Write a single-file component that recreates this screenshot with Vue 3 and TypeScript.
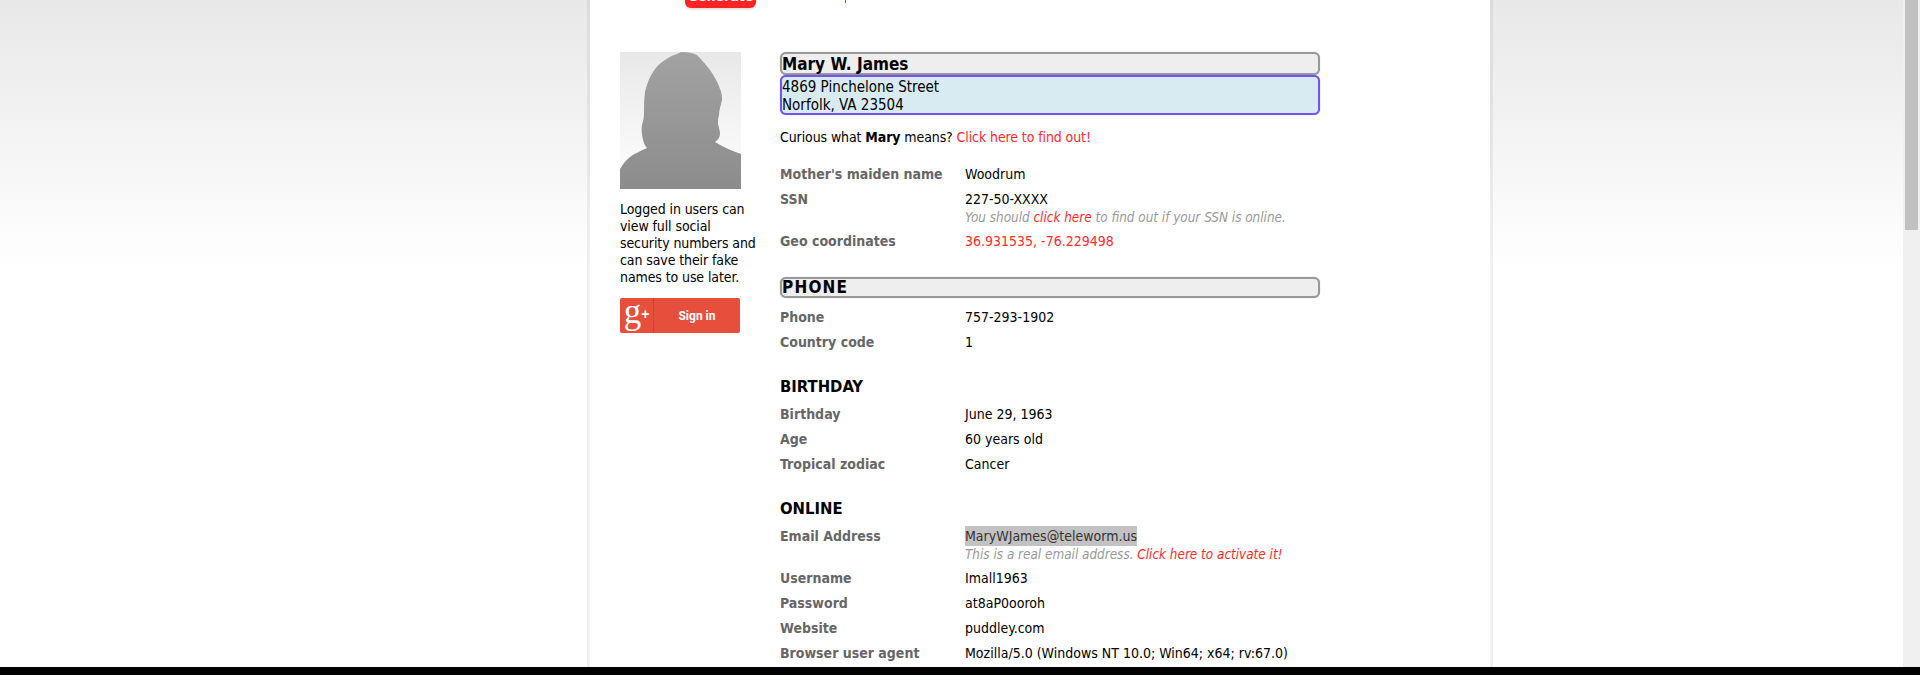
<script setup lang="ts">
interface Row { label: string; value: string; kind?: string; hint?: { before?: string; link: string; after?: string } }
interface Section { title: string; boxed: boolean; rows: Row[] }

const firstRows: Row[] = [
  { label: "Mother's maiden name", value: 'Woodrum' },
  { label: 'SSN', value: '227-50-XXXX', hint: { before: 'You should ', link: 'click here', after: ' to find out if your SSN is online.' } },
  { label: 'Geo coordinates', value: '36.931535, -76.229498', kind: 'link' },
]
const sections: Section[] = [
  { title: 'PHONE', boxed: true, rows: [
    { label: 'Phone', value: '757-293-1902' },
    { label: 'Country code', value: '1' },
  ] },
  { title: 'BIRTHDAY', boxed: false, rows: [
    { label: 'Birthday', value: 'June 29, 1963' },
    { label: 'Age', value: '60 years old' },
    { label: 'Tropical zodiac', value: 'Cancer' },
  ] },
  { title: 'ONLINE', boxed: false, rows: [
    { label: 'Email Address', value: 'MaryWJames@teleworm.us', kind: 'selected', hint: { before: 'This is a real email address. ', link: 'Click here to activate it!' } },
    { label: 'Username', value: 'Imall1963' },
    { label: 'Password', value: 'at8aP0ooroh' },
    { label: 'Website', value: 'puddley.com' },
    { label: 'Browser user agent', value: 'Mozilla/5.0 (Windows NT 10.0; Win64; x64; rv:67.0)' },
  ] },
]
</script>

<template>
  <div class="viewport">
    <div class="stage">
      <main class="panel">
        <div class="top-strip">
          <span class="generate">Generate</span>
          <span class="tick"></span>
        </div>
        <div class="columns">
          <aside class="side">
            <svg class="avatar" viewBox="0 0 121 137" preserveAspectRatio="none">
              <defs>
                <linearGradient id="avbg" x1="0" y1="0" x2="0" y2="1">
                  <stop offset="0" stop-color="#e8e8e8" />
                  <stop offset="1" stop-color="#ffffff" />
                </linearGradient>
                <linearGradient id="avfg" x1="0" y1="0" x2="0" y2="1">
                  <stop offset="0" stop-color="#a2a2a2" />
                  <stop offset="1" stop-color="#8c8c8c" />
                </linearGradient>
              </defs>
              <rect width="121" height="137" fill="url(#avbg)" />
              <path fill="url(#avfg)" d="M62 0C68 0 73 1 77 3C82 8 86 13 90 18C94 24 98 30 100 37C102 41 102 45 102 48C101 53 99 58 99 63C98 66 98 69 98 72C99 76 100 79 100 82C100 85 98 88 95 90C103 95 112 99 121 102V137H0V117C3 112 6 108 10 105C15 101 21 99 27 96C25 94 24 91 23 88C22 83 21 78 22 73C23 69 24 66 24 62C24 55 24 47 25 40C27 32 29 26 33 20C36 15 40 11 45 8C49 5 53 3 57 2C59 1 60 0 62 0Z" />
            </svg>
            <p class="side-note">Logged in users can view full social security numbers and can save their fake names to use later.</p>
            <div class="gplus">
              <span class="g-mark"><span class="g-letter">g</span><span class="g-plus">+</span></span>
              <span class="g-label">Sign in</span>
            </div>
          </aside>
          <section class="info">
            <h3 class="bar name">Mary W. James</h3>
            <div class="address">4869 Pinchelone Street<br />Norfolk, VA 23504</div>
            <p class="curious">Curious what <b>Mary</b> means? <span class="red">Click here to find out!</span></p>
            <dl class="rows">
              <div v-for="r in firstRows" :key="r.label" class="row">
                <dt>{{ r.label }}</dt>
                <dd>
                  <span :class="{ red: r.kind === 'link' }">{{ r.value }}</span>
                  <div v-if="r.hint" class="hint">{{ r.hint.before }}<span class="red">{{ r.hint.link }}</span>{{ r.hint.after }}</div>
                </dd>
              </div>
            </dl>
            <template v-for="s in sections" :key="s.title">
              <h3 :class="s.boxed ? 'bar phone' : 'plain'">{{ s.title }}</h3>
              <dl class="rows">
                <div v-for="r in s.rows" :key="r.label" class="row">
                  <dt>{{ r.label }}</dt>
                  <dd>
                    <span :class="{ red: r.kind === 'link', selected: r.kind === 'selected' }">{{ r.value }}</span>
                    <div v-if="r.hint" class="hint">{{ r.hint.before }}<span class="red">{{ r.hint.link }}</span>{{ r.hint.after }}</div>
                  </dd>
                </div>
              </dl>
            </template>
          </section>
        </div>
      </main>
      <div class="scrollbar"><div class="thumb"></div></div>
    </div>
    <div class="blackbar"></div>
  </div>
</template>

<style scoped>
.viewport {
  width: 1920px;
  height: 675px;
  display: flex;
  flex-direction: column;
  overflow: hidden;
  font-family: "DejaVu Sans Condensed", "DejaVu Sans", sans-serif;
  font-size: 14px;
  color: #000;
}
.stage {
  flex: 1;
  min-height: 0;
  display: flex;
  overflow: hidden;
  background: linear-gradient(#e8e8e8 0, #ffffff 270px, #ffffff 100%);
}
.panel {
  width: 900px;
  flex: none;
  margin-left: 590px;
  background: #fff;
  box-shadow: 0 0 0 3px rgba(0, 0, 0, 0.055);
  padding: 0 30px;
  box-sizing: border-box;
}
.top-strip {
  height: 52px;
  position: relative;
}
.generate {
  position: absolute;
  left: 65px;
  top: -20px;
  width: 71px;
  height: 28px;
  border-radius: 6px;
  background: #ff2323;
  box-shadow: 0 1px 3px rgba(0, 0, 0, 0.2);
  color: #fff;
  font-weight: 700;
  font-size: 14px;
  line-height: 33px;
  text-align: center;
  overflow: hidden;
}
.tick {
  position: absolute;
  left: 225px;
  top: 0;
  width: 1px;
  height: 3px;
  background: #ff2323;
}
.columns {
  display: flex;
  gap: 18px;
}
.side {
  width: 142px;
  flex: none;
}
.avatar {
  display: block;
  width: 121px;
  height: 137px;
}
.side-note {
  margin: 12px 0 0;
  line-height: 17px;
  letter-spacing: -0.1px;
}
.gplus {
  margin-top: 12px;
  width: 120px;
  height: 35px;
  background: #e74f3d;
  border-radius: 2px;
  display: flex;
  align-items: center;
  color: #fff;
}
.g-mark {
  width: 34px;
  height: 35px;
  box-sizing: border-box;
  border-right: 1px solid #d5402f;
  display: flex;
  align-items: center;
  justify-content: center;
  font-family: "Liberation Serif", serif;
  line-height: 1;
}
.g-letter {
  font-size: 35px;
  margin-top: -9px;
}
.g-plus {
  font-size: 14px;
  font-family: "Liberation Sans", sans-serif;
  font-weight: 700;
  margin-top: -4px;
}
.g-label {
  flex: 1;
  text-align: center;
  font-family: Roboto, sans-serif;
  font-size: 12px;
  font-weight: 700;
}
.info {
  width: 540px;
  flex: none;
}
.bar {
  margin: 0;
  box-sizing: border-box;
  border: 2px solid #999;
  border-radius: 6px;
  background: #eee;
  font-weight: 700;
  box-shadow: 0 0 1px #999;
}
.name {
  font-size: 17px;
  height: 23px;
  line-height: 20px;
}
.address {
  box-sizing: border-box;
  height: 40px;
  border: 2px solid #7255ee;
  border-radius: 6px;
  background: #d9ebf2;
  box-shadow: 0 0 1px #7255ee;
  padding-top: 1px;
  font-size: 15px;
  line-height: 18px;
}
.curious {
  margin: 14px 0 0;
  line-height: 17px;
  letter-spacing: -0.1px;
}
.red {
  color: #ff2a2a;
}
.rows {
  margin: 0;
}
.curious + .rows {
  margin-top: 20px;
}
.row {
  display: flex;
  padding-bottom: 8px;
  line-height: 17px;
}
dt {
  width: 185px;
  flex: none;
  font-weight: 700;
  color: #666;
}
dd {
  margin: 0;
}
.hint {
  margin-top: 3px;
  font-size: 13.4px;
  font-style: italic;
  color: #999;
  line-height: 14px;
}
.phone {
  margin: 19px 0 11px;
  font-size: 17px;
  letter-spacing: 1.2px;
  height: 21px;
  line-height: 17px;
}
.plain {
  margin: 19px 0 11px;
  font-size: 16.5px;
  font-weight: 700;
  line-height: 17px;
}
.selected {
  background: #c2c2c2;
  color: #333;
  padding: 2px 0;
}
.scrollbar {
  width: 17px;
  flex: none;
  margin-left: auto;
  background: #f0f0f0;
  display: flex;
  justify-content: center;
}
.thumb {
  width: 13px;
  height: 230px;
  background: #c1c1c1;
}
.blackbar {
  height: 8px;
  flex: none;
  background: #000;
}
</style>
